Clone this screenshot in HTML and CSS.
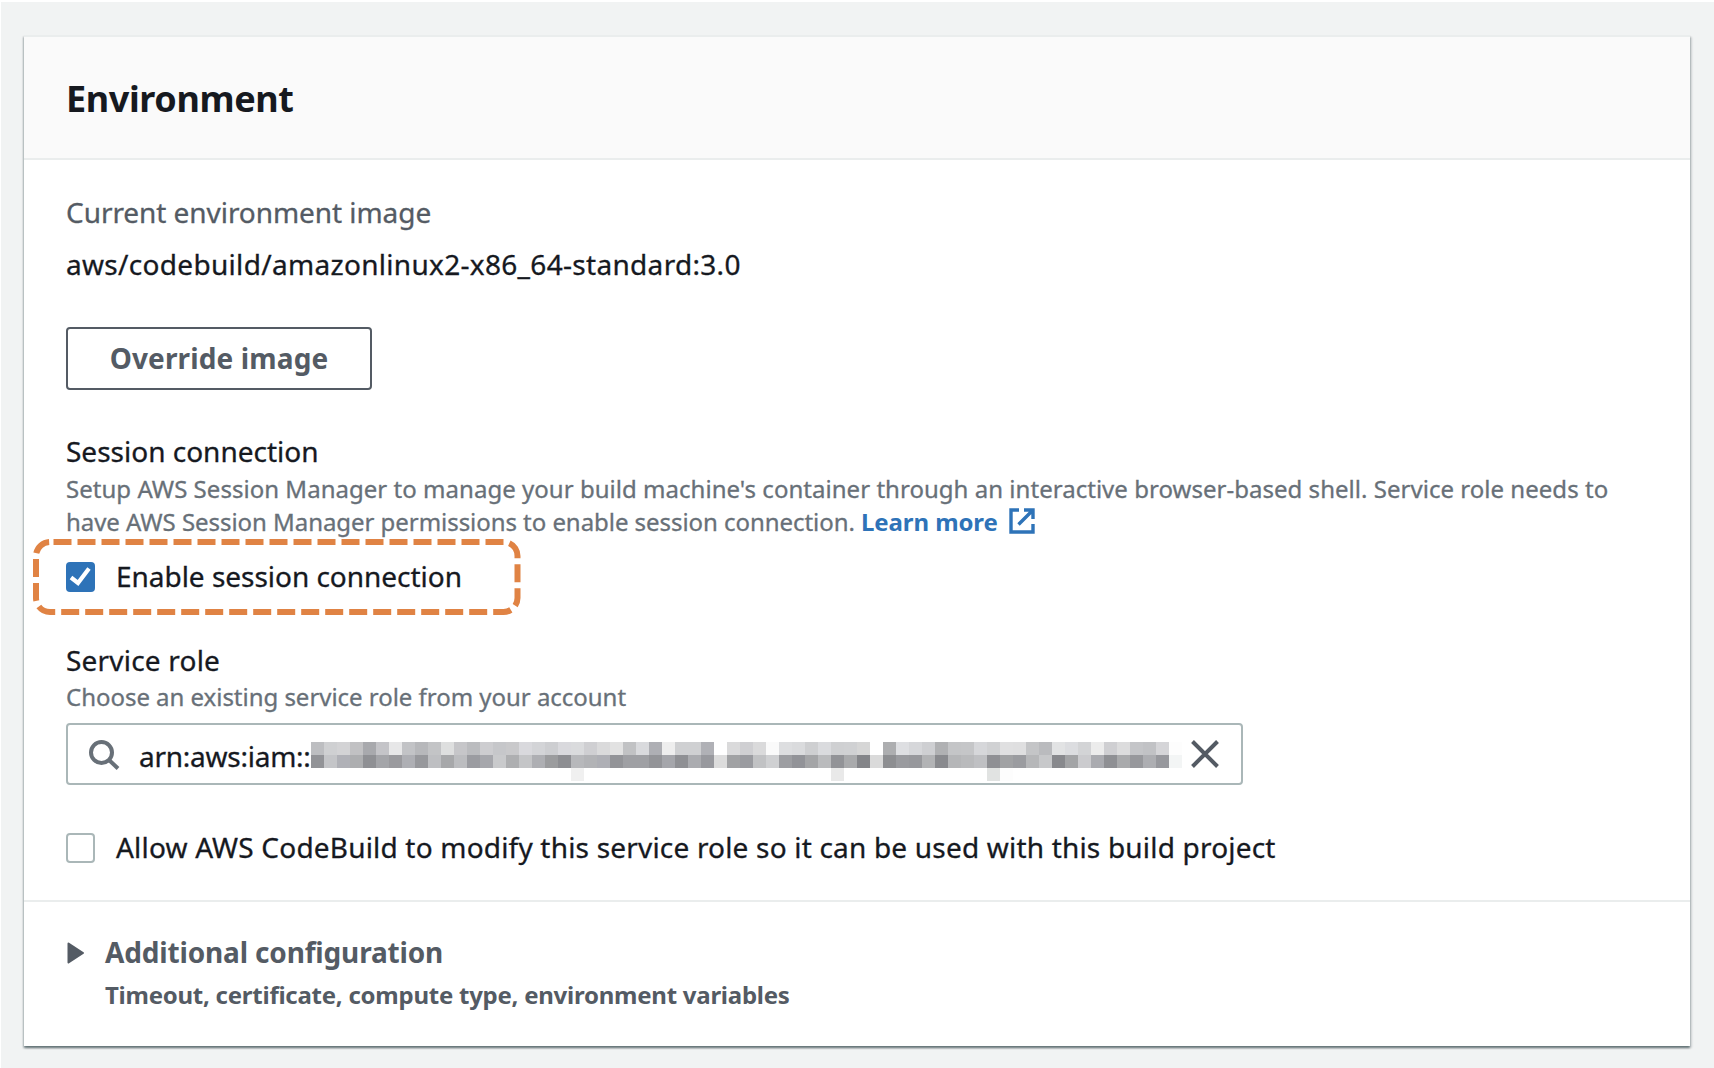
FILE: index.html
```html
<!DOCTYPE html>
<html lang="en">
<head>
<meta charset="utf-8">
<title>Environment</title>
<link rel="stylesheet" href="styles.css">
</head>
<body>
<main class="card">
  <header class="card-header"><h1 class="title">Environment</h1></header>
  <section class="card-body">
    <div class="label muted current-label">Current environment image</div>
    <div class="label image-name">aws/codebuild/amazonlinux2-x86_64-standard:3.0</div>
    <button class="button">Override image</button>
    <div class="label session-label">Session connection</div>
    <p class="hint session-hint"><span class="line-one">Setup AWS Session Manager to manage your build machine's container through an interactive browser-based shell. Service role needs to</span><br><span class="line-two">have AWS Session Manager permissions to enable session connection. </span><a class="link">Learn more</a><svg class="external" width="26" height="26" viewBox="0 0 26 26"><path d="M10 2H2v22h22v-8M15 2h9v9M23.500 2.500L9.500 16.500" fill="none" stroke="#2e73b8" stroke-width="3.400"/></svg></p>
    <div class="check-row enable-row">
      <svg class="highlight" width="494" height="82" viewBox="0 0 494 82"><rect x="6" y="6" width="481.500" height="70" rx="14" fill="none" stroke="#e08344" stroke-width="6" stroke-dasharray="18 6" stroke-dashoffset="-3.500"/></svg>
      <span class="checkbox checked"><svg width="29" height="30" viewBox="0 0 29 30"><path d="M5 15.500L12 21L23 6.500" fill="none" stroke="#fff" stroke-width="4.200"/></svg></span>
      <span class="enable-text">Enable session connection</span>
    </div>
    <div class="label role-label">Service role</div>
    <p class="hint role-hint">Choose an existing service role from your account</p>
    <div class="input">
      <svg class="search" width="32" height="32" viewBox="0 0 32 32"><circle cx="13.500" cy="13.500" r="10.500" fill="none" stroke="#687078" stroke-width="4"/><path d="M20.500 20.500L30 29.500" stroke="#687078" stroke-width="4"/></svg>
      <span class="arn">arn:aws:iam::</span>
      <div class="mosaic" id="mosaic"></div>
      <svg class="clear" width="28" height="28" viewBox="0 0 28 28"><path d="M1.500 1.500L26.500 26.500M26.500 1.500L1.500 26.500" stroke="#545b64" stroke-width="4"/></svg>
    </div>
    <div class="check-row allow-row">
      <span class="checkbox"></span>
      <span class="allow-text">Allow AWS CodeBuild to modify this service role so it can be used with this build project</span>
    </div>
  </section>
  <footer class="more">
    <svg class="caret" width="18" height="22" viewBox="0 0 18 22"><path d="M1.500 1.500L16 11L1.500 20.500Z" fill="#545b64" stroke="#545b64" stroke-width="2" stroke-linejoin="round"/></svg>
    <div>
      <div class="more-title">Additional configuration</div>
      <div class="more-sub">Timeout, certificate, compute type, environment variables</div>
    </div>
  </footer>
</main>
<script src="mosaic.js"></script>
</body>
</html>
```
FILE: styles.css
```css
* { box-sizing: border-box; }
body {
  margin: 0;
  height: 1068px;
  padding: 33px 24px 0 23px;
  border-top: 2px solid #fff;
  border-left: 1px solid #fff;
  background: #f1f3f3;
  color: #16191f;
  font-family: "Noto Sans", sans-serif;
  overflow: hidden;
}
.card {
  width: 1666px;
  height: 1011px;
  background: #fff;
  border-top: 2px solid #eaeded;
  box-shadow: 0 2px 2px 0 rgba(0, 28, 36, .45), 2px 2px 2px 0 rgba(0, 28, 36, .12), -1px 2px 2px 0 rgba(0, 28, 36, .15);
}
.card-header {
  height: 123px;
  padding: 40px 42px 0;
  background: #fafafa;
  border-bottom: 2px solid #eaeded;
}
.title { margin: 0; font-size: 36px; line-height: 44px; font-weight: 700; letter-spacing: -.38px; }
.card-body { height: 742px; padding: 32px 42px 0; border-bottom: 2px solid #eaeded; -webkit-text-stroke-width: .3px; }
.label { font-size: 28px; line-height: 40px; white-space: nowrap; }
.muted { color: #545b64; }
.current-label { letter-spacing: -.06px; }
.image-name { margin-top: 12px; letter-spacing: .31px; }
.button {
  display: block;
  width: 306px;
  height: 63px;
  margin: 43px 0 0;
  padding: 0 0 2px;
  border: 2px solid #545b64;
  border-radius: 4px;
  background: #fff;
  color: #545b64;
  font: 700 28px/40px "Noto Sans", sans-serif;
  letter-spacing: .13px;
  -webkit-text-stroke-width: 0;
}
.session-label { margin-top: 41px; }
.hint { margin: 1px 0 0; font-size: 24px; line-height: 33px; color: #687078; white-space: nowrap; }
.line-one { letter-spacing: .03px; }
.line-two { letter-spacing: -.05px; white-space: pre; }
.link { color: #2e73b8; font-weight: 700; letter-spacing: -.1px; -webkit-text-stroke-width: 0; }
.external { margin-left: 11px; vertical-align: -3px; }
.check-row { position: relative; display: flex; align-items: center; height: 40px; font-size: 28px; line-height: 40px; white-space: nowrap; }
.enable-row { margin-top: 18px; }
.highlight { position: absolute; left: -36px; top: -20px; }
.checkbox { width: 29px; height: 30px; margin: 2px 21px 0 0; border: 2px solid #aab7b8; border-radius: 4px; flex: none; }
.checked { border: 0; background: #2e73b8; }
.checked svg { display: block; }
.enable-text { letter-spacing: -.03px; }
.role-label { margin-top: 44px; letter-spacing: .2px; }
.role-hint { margin-top: 0; letter-spacing: -.03px; }
.input {
  display: flex;
  align-items: flex-start;
  width: 1177px;
  height: 62px;
  margin-top: 10px;
  border: 2px solid #aab7b8;
  border-radius: 4px;
  font-size: 28px;
  line-height: 40px;
}
.search { margin: 14px 0 0 20px; flex: none; }
.arn { width: 172px; margin: 11px 0 0 19px; flex: none; white-space: nowrap; letter-spacing: -.25px; }
.mosaic { display: grid; grid-template-columns: repeat(67, 13px); grid-auto-rows: 13px; margin-top: 17px; flex: none; }
.clear { margin: 15px 0 0 9px; flex: none; }
.allow-row { margin-top: 42px; }
.allow-text { letter-spacing: .19px; }
.more { display: flex; padding: 30px 0 0 43px; color: #545b64; font-weight: 700; white-space: nowrap; }
.caret { margin: 10px 20px 0 0; flex: none; }
.more-title { font-size: 28px; line-height: 40px; letter-spacing: -.16px; }
.more-sub { margin-top: 6px; font-size: 24px; line-height: 33px; letter-spacing: -.25px; }
```
FILE: mosaic.js
```js
// Each row lists the tint of its 13px cells, left to right.
const rows = [
  "bdbec1 cfd0d2 d3d3d5 c1c1c3 a8a9ad c4c4c8 e7e7e8 c2c3c6 b7b8bb c3c4c6 dedfdf c6c6c9 bbbcbf cdcdd0 c6c7ca c9c9cb d9d9dd d3d4d7 cdced1 d9d9dd dadbdd cfcfd2 dadadb e2e2e2 c1c2c4 d9dadd aeafb4 eeeeee cfd0d2 cfd0d2 b0b1b6 ffffff dadadb cfcfd2 dadadb fafafa dddee0 dadbdd cecfd1 dadbde cfd0d2 d0d1d3 d6d6d6 ffffff adaeb0 dedfe2 d6d7da cecfd2 b0b1b3 c4c5c7 c5c6c8 d6d7da d0d1d3 e0e0e1 dfdfe0 c4c5c7 babbbe e2e3e4 dcdde0 d3d4d6 ececec cfcfd2 dcdcdd c4c5c8 c1c2c5 d5d5d8 fdfdfd",
  "929397 c4c5c8 b0b1b7 adaeb0 8f9094 a4a5a9 9a9a9e aeafb4 97989c bebfc2 a7a8aa bcbdc0 9b9ca1 a6a7ac c9cacc aeafb1 c4c5c7 aeafb3 9b9c9e 8d8e92 b7b8bb b2b3b6 aeafb5 939498 9fa0a4 9fa0a4 939498 a5a6ab 8f9094 abacb0 98999e dcdcdc a1a2a4 9a9ba0 c1c2c4 cfd0d2 9d9ea2 929398 a4a5a7 babbbd 929397 a9aaac 848589 dadada 8d8e91 9a9b9f 97989c b2b3b5 898a8e b5b6b8 b9babc bfc0c3 8f9094 a1a2a4 9b9ca0 b6b7b9 c7c8ca 88898d a3a4a6 cbcbce aaabb0 8f9094 a9aaac 97989c adaeb2 97989d f3f5f5"
].map(row => row.split(" "));
const tail = Array(67).fill("ffffff");
tail[20] = "f0f0f0";
tail[40] = "e9e9e9";
tail[52] = "e1e3e2";
tail[53] = "fdfdfd";
rows.push(tail);
// The last two tints of the top rows trail off into the field's background.
const mosaic = document.getElementById("mosaic");
for (const color of rows.flat()) {
  const cell = document.createElement("i");
  cell.style.background = "#" + color;
  mosaic.appendChild(cell);
}
```
